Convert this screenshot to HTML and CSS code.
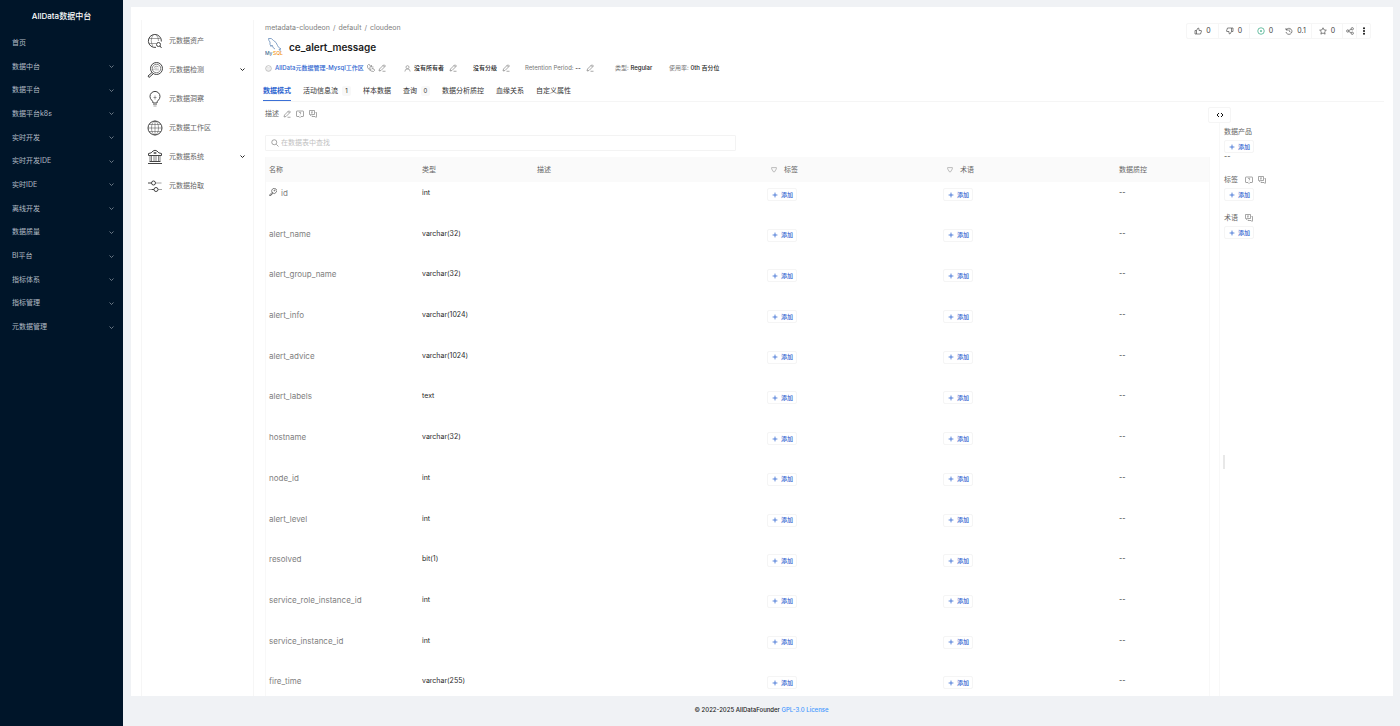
FILE: index.html
```html
<!DOCTYPE html>
<html lang="zh-CN">
<head>
<meta charset="utf-8">
<title>AllData数据中台</title>
<link rel="stylesheet" href="styles.css">
</head>
<body>
<svg class="sprite" aria-hidden="true">
  <symbol id="chevron" viewBox="0 0 10 10"><path d="M1 3l4 4 4-4"/></symbol>
  <symbol id="pencil" viewBox="0 0 16 16"><path d="M2 14l1-4L11 2q1-1 2 0l1 1q1 1 0 2L6 13zM10 3l3 3M9 14.500h6"/></symbol>
  <symbol id="request" viewBox="0 0 16 16"><path d="M2 2h12q1 0 1 1v9q0 1-1 1h-4l-2 2-2-2H2q-1 0-1-1V3q0-1 1-1zM6.500 6q0-1.500 1.500-1.500T9.500 6 8 8M8 9.500v1"/></symbol>
  <symbol id="comments" viewBox="0 0 16 16"><path d="M1 1h10v8H5l-2 2V9H1zM4 4h4M4 6h3M13 5h2v8h-1v2l-2-2H6v-2"/></symbol>
  <symbol id="search" viewBox="0 0 16 16"><circle cx="6.500" cy="6.500" r="5"/><path d="M10.500 10.500L15 15"/></symbol>
  <symbol id="plus" viewBox="0 0 10 10"><path d="M5 1v8M1 5h8"/></symbol>
  <symbol id="filter" viewBox="0 0 10 10"><path d="M1 1h8v2L6 8H4L1 3z"/></symbol>
  <symbol id="user" viewBox="0 0 16 16"><circle cx="8" cy="5" r="3.500"/><path d="M2 15q0-6 6-6t6 6"/></symbol>
  <symbol id="phone" viewBox="0 0 16 16"><path d="M3 1l3 1 1 4-2 2q1 3 3 3l2-2 4 1 1 3-2 2Q8 15 4 11T1 3zM9 2v4h4"/></symbol>
  <symbol id="key" viewBox="0 0 16 16"><path d="M6 9L1 14v1h3v-2h2v-2l2-1M6 9q-2-4 1-7t7 0 0 7-6 1z"/><circle cx="11" cy="5" r="1"/></symbol>
  <symbol id="like" viewBox="0 0 16 16"><path d="M2 7h3v7H2zM5 7l3-5q2 0 2 2v3h4q1 0 1 1l-2 6H5"/></symbol>
  <symbol id="dislike" viewBox="0 0 16 16"><path d="M11 2h3v7h-3zM11 9l-3 5q-2 0-2-2V9H2q-1 0-1-1l2-6h8"/></symbol>
  <symbol id="task" viewBox="0 0 16 16"><circle cx="8" cy="8" r="6.500"/><circle cx="8" cy="8" r="1" fill="currentColor"/></symbol>
  <symbol id="history" viewBox="0 0 16 16"><path d="M2 2v4h4M2.500 6a6 6 0 1 1-.500 4M8 4.500V8l3 2"/></symbol>
  <symbol id="star" viewBox="0 0 16 16"><path d="M8 1.500l2 4.300 4.700.6-3.400 3.200.9 4.700L8 12l-4.200 2.300.9-4.700L1.300 6.400 6 5.800z"/></symbol>
  <symbol id="share" viewBox="0 0 16 16"><circle cx="3.500" cy="8" r="2.300"/><circle cx="12.500" cy="3.500" r="2.300"/><circle cx="12.500" cy="12.500" r="2.300"/><path d="M5.500 7l5-2.500M5.500 9l5 2.500"/></symbol>
  <symbol id="dots" viewBox="0 0 16 16"><g fill="currentColor" stroke="none"><circle cx="8" cy="2.500" r="2"/><circle cx="8" cy="8" r="2"/><circle cx="8" cy="13.500" r="2"/></g></symbol>
  <symbol id="code" viewBox="0 0 16 16"><path d="M6 4L2 8l4 4M10 4l4 4-4 4"/></symbol>
  <symbol id="workspace" viewBox="0 0 16 16"><circle cx="8" cy="8" r="6.500"/><path d="M4 6h8M3 9h10M5 12h6" stroke-width=".6"/></symbol>
  <symbol id="globe-search" viewBox="0 0 32 32"><path d="M18 28.700A13 13 0 1 1 28.700 17"/><g stroke-width="1"><path d="M12 4q-7 11 0 23M19 4q4 5 4 12M4 11h23M4 21h14"/></g><circle cx="23" cy="23" r="4"/><path d="M26 26l3 4"/></symbol>
  <symbol id="inspect" viewBox="0 0 32 32"><circle cx="19" cy="13" r="12"/><circle cx="19" cy="13" r="8.500" stroke-width="1.300"/><path d="M10 21l-8 7 2 3 8-7"/><path d="M14 16v-3M18 17v-6M22 17v-4M14 11l4-3 5 2" stroke-width="1"/></symbol>
  <symbol id="bulb" viewBox="0 0 32 32"><path d="M12 24q0-4-3-6a10 10 0 1 1 14 0q-3 2-3 6z"/><path d="M16 9v8M13 13h6M12 27h8M13 30h6" stroke-width="1"/></symbol>
  <symbol id="globe" viewBox="0 0 32 32"><circle cx="16" cy="16" r="14"/><g stroke-width="1"><ellipse cx="16" cy="16" rx="7" ry="14"/><path d="M2 16h28M4 9h24M4 23h24M16 2v28"/></g></symbol>
  <symbol id="bank" viewBox="0 0 32 32"><path d="M3 9q6 0 9-5 4-3 8 0 3 5 9 5v4H3zM5 25h22M2 29h28M16 6v4M13 8h6"/><path d="M6 14v10M9 14v10M14 14v10M18 14v10M23 14v10M26 14v10" stroke-width="1.300"/></symbol>
  <symbol id="sliders" viewBox="0 0 32 32"><circle cx="13" cy="10" r="4"/><circle cx="18" cy="23" r="4"/><path d="M2 10h7M9 23h5"/><path d="M18 10h11M22 23h8M3 23h6" stroke-width="1"/></symbol>
</svg>

<aside class="sidebar">
  <h1 class="brand">AllData数据中台</h1>
  <nav class="menu" id="menu"></nav>
</aside>

<div class="page">
  <main class="card">
    <nav class="subnav">
      <a href="#"><svg class="ic-lg"><use href="#globe-search"/></svg><span>元数据资产</span></a>
      <a href="#"><svg class="ic-lg"><use href="#inspect"/></svg><span>元数据检测</span><svg class="ic-xs"><use href="#chevron"/></svg></a>
      <a href="#"><svg class="ic-lg"><use href="#bulb"/></svg><span>元数据洞察</span></a>
      <a href="#"><svg class="ic-lg"><use href="#globe"/></svg><span>元数据工作区</span></a>
      <a href="#"><svg class="ic-lg"><use href="#bank"/></svg><span>元数据系统</span><svg class="ic-xs"><use href="#chevron"/></svg></a>
      <a href="#"><svg class="ic-lg"><use href="#sliders"/></svg><span>元数据拾取</span></a>
    </nav>

    <section class="content">
      <header class="head">
        <div class="head-main">
          <nav class="crumbs"><a href="#">metadata-cloudeon</a><span>/</span><a href="#">default</a><span>/</span><a href="#">cloudeon</a></nav>
          <div class="title">
            <svg class="logo" viewBox="0 0 36 36" role="img" aria-label="MySQL">
              <g fill="none" stroke="#5f86b5" stroke-width="1.500"><path d="M7 1q6-2 10 4 6 3 8 10 1 4 7 7l-4 1 4 4M7 1q0 4 3 7-1 5 2 9l2-3q2 7 6 8"/></g>
              <text x="0" y="34" class="logo-blue">My</text><text x="16" y="34" class="logo-orange">SQL</text>
            </svg>
            <h2>ce_alert_message</h2>
          </div>
        </div>
        <div class="actions">
          <button><svg class="ic"><use href="#like"/></svg>0</button>
          <button><svg class="ic"><use href="#dislike"/></svg>0</button>
          <button class="green"><svg class="ic"><use href="#task"/></svg>0</button>
          <button class="joined"><svg class="ic"><use href="#history"/></svg>0.1</button>
          <button><svg class="ic"><use href="#star"/></svg>0</button>
          <button class="slim" aria-label="分享"><svg class="ic"><use href="#share"/></svg></button>
          <button class="slim" aria-label="更多"><svg class="ic"><use href="#dots"/></svg></button>
        </div>
      </header>

      <div class="meta">
        <div><svg class="ic-sm"><use href="#workspace"/></svg><a href="#">AllData元数据管理-Mysql工作区</a><svg class="ic"><use href="#phone"/></svg><svg class="ic"><use href="#pencil"/></svg></div>
        <div><svg class="ic-sm"><use href="#user"/></svg><b>没有所有者</b><svg class="ic"><use href="#pencil"/></svg></div>
        <div><b>没有分级</b><svg class="ic"><use href="#pencil"/></svg></div>
        <div><span>Retention Period: <b>--</b></span><svg class="ic"><use href="#pencil"/></svg></div>
        <div><span>类型: <b>Regular</b></span></div>
        <div><span>使用率: <b>0th 百分位</b></span></div>
      </div>

      <nav class="tabs">
        <a href="#" class="active">数据模式</a>
        <a href="#">活动信息流<i>1</i></a>
        <a href="#">样本数据</a>
        <a href="#">查询<i>0</i></a>
        <a href="#">数据分析质控</a>
        <a href="#">血缘关系</a>
        <a href="#">自定义属性</a>
      </nav>

      <div class="body">
        <div class="schema">
          <div class="desc">描述<svg class="ic"><use href="#pencil"/></svg><svg class="ic"><use href="#request"/></svg><svg class="ic"><use href="#comments"/></svg></div>
          <label class="search"><svg class="ic"><use href="#search"/></svg><input type="text" placeholder="在数据表中查找" aria-label="在数据表中查找"></label>
          <table>
            <colgroup><col class="c-name"><col class="c-type"><col class="c-desc"><col class="c-tag"><col class="c-tag"><col class="c-quality"></colgroup>
            <thead><tr><th>名称</th><th>类型</th><th>描述</th><th class="filtered"><svg class="ic-xs"><use href="#filter"/></svg>标签</th><th class="filtered"><svg class="ic-xs"><use href="#filter"/></svg>术语</th><th>数据质控</th></tr></thead>
            <tbody id="rows"></tbody>
          </table>
        </div>
        <aside class="panel">
          <button class="toggle" aria-label="收起"><svg class="ic"><use href="#code"/></svg></button>
          <div class="panel-body">
            <section><h3>数据产品</h3><button class="add"><svg class="ic-xs"><use href="#plus"/></svg>添加</button><p>--</p></section>
            <section><h3>标签<svg class="ic"><use href="#request"/></svg><svg class="ic"><use href="#comments"/></svg></h3><button class="add"><svg class="ic-xs"><use href="#plus"/></svg>添加</button></section>
            <section><h3>术语<svg class="ic"><use href="#comments"/></svg></h3><button class="add"><svg class="ic-xs"><use href="#plus"/></svg>添加</button></section>
            <div class="grip"></div>
          </div>
        </aside>
      </div>
    </section>
  </main>
  <footer>© 2022-2025 AllDataFounder <a href="#">GPL-3.0 License</a></footer>
</div>
<script src="app.js"></script>
</body>
</html>
```
FILE: styles.css
```css
* { box-sizing: border-box; }
body {
  margin: 0;
  height: 100vh;
  display: flex;
  overflow: hidden;
  background: #f0f2f5;
  color: #37352f;
  font: 7px/10px Inter, "Noto Sans CJK SC", sans-serif;
}
a { color: inherit; text-decoration: none; }
button { font: inherit; color: inherit; background: none; border: 0; padding: 0; }
h1, h2, h3, p { margin: 0; }
svg { flex: none; fill: none; stroke: currentColor; stroke-width: 1.3; }
.sprite { position: absolute; width: 0; height: 0; }
.ic { width: 8px; height: 8px; }
.ic-sm { width: 7px; height: 7px; }
.ic-xs { width: 6px; height: 6px; }
.ic-lg { width: 16px; height: 16px; stroke-width: 2; }

.sidebar { width: 123px; flex: none; background: #001529; color: #b3bcc5; }
.brand { height: 31px; color: #fff; font-size: 8px; line-height: 32px; font-weight: 500; text-align: center; }
.menu { display: grid; grid-auto-rows: 1fr; height: 308px; }
.menu a { display: flex; align-items: center; justify-content: space-between; padding: 0 9px 0 12px; }
.menu svg { width: 5px; height: 5px; color: #a0aab4; }

.page { flex: 1; min-width: 0; display: flex; flex-direction: column; }
.card { flex: 1; min-height: 0; display: flex; margin: 7px 7px 0 8px; padding: 13px 9px 0 10px; background: #fff; overflow: hidden; }
footer { height: 30px; font-size: 6px; line-height: 28px; text-align: center; color: #222; font-weight: 500; }
footer a { color: #4096ff; }

.subnav { width: 113px; flex: none; padding: 6px 8px 0 5px; border: solid #f6f6f6; border-width: 0 1px; color: #666; }
.subnav a { display: flex; align-items: center; gap: 6px; height: 29px; }
.subnav svg { color: #444; }
.subnav .ic-xs { width: 5px; height: 5px; margin-left: auto; stroke-width: 2; color: #222; }

.content { flex: 1; min-width: 0; padding-left: 11px; display: flex; flex-direction: column; }
.head { display: flex; justify-content: space-between; align-items: flex-start; height: 41px; }
.crumbs { display: flex; gap: 3px; padding-top: 3px; color: #808080; }
.title { display: flex; align-items: center; gap: 6px; height: 28px; }
.title h2 { font-size: 10px; line-height: 14px; font-weight: 600; color: #1c1c1c; }
.logo { width: 18px; height: 18px; stroke: none; }
.logo text { font: 500 10px Inter, sans-serif; }
.logo-blue { fill: #3d6e93; }
.logo-orange { fill: #f29111; }

.actions { display: flex; height: 16px; margin: 3px 13px 0 0; border: 1px solid #f6f6f6; border-radius: 2px; color: #444; }
.actions button { display: flex; align-items: center; justify-content: center; gap: 4px; width: 31px; border-left: 1px solid #f6f6f6; }
.actions button:first-child, .actions .joined { border-left: 0; }
.actions .slim { width: 14px; }
.actions .green svg { color: #1f9d74; }
.actions .slim:last-child { color: #111; }

.meta { display: grid; grid-template-columns: 139px 69px 52px 90px 54px auto; height: 14px; font-size: 6px; color: #757575; }
.meta div { display: flex; align-items: center; gap: 3px; white-space: nowrap; }
.meta b { font-weight: 500; color: #222; }
.meta a { color: #2f66d0; font-weight: 500; }
.meta .ic { color: #777; }
.meta b + .ic, .meta span + .ic { margin-left: 2px; }
.meta div:first-child .ic-sm { color: #999; }

.tabs { display: flex; gap: 12px; height: 27px; margin-left: -2px; border-bottom: 1px solid #f5f5f5; color: #333; }
.tabs a { display: flex; align-items: center; gap: 4px; padding-top: 6px; border-bottom: 1px solid transparent; }
.tabs a.active { border-color: #3b70d6; color: #2f66d0; font-weight: 700; }
.tabs i { width: 9px; background: #f8f8f8; border-radius: 2px; font-style: normal; font-size: 6px; text-align: center; }

.body { flex: 1; min-height: 0; display: flex; gap: 2px; }
.schema { flex: 1; min-width: 0; padding-top: 7px; }
.desc { display: flex; align-items: center; gap: 4px; height: 10px; color: #666; }
.desc .ic { color: #777; }
.desc .ic + .ic { margin-left: 1px; }
.search { display: flex; align-items: center; gap: 2px; width: 50%; height: 16px; margin: 16px 0 6px; padding: 0 5px; border: 1px solid #f3f3f3; border-radius: 1px; color: #777; }
.search input { flex: 1; min-width: 0; padding: 0; border: 0; outline: 0; font: inherit; background: none; }
.search input::placeholder { color: #bfbfbf; }

table { width: 100%; height: 554px; table-layout: fixed; border-collapse: separate; border-spacing: 0; border: solid #f8f8f8; border-width: 0 1px; }
.c-name { width: 153px; }
.c-type { width: 115px; }
.c-desc { width: 230px; }
.c-tag { width: 176px; }
.c-quality { width: 93px; }
th { height: 25px; padding: 0 3px; background: #fafafa; color: #666; font-weight: 400; text-align: left; }
th.filtered { padding-left: 7px; }
th svg { margin-right: 7px; color: #aaa; vertical-align: middle; }
td { padding: 6px 3px 0; vertical-align: top; color: #292929; }
td.name { color: #808080; font-size: 8px; }
td.name svg { margin-right: 4px; color: #444; }
.add { display: flex; align-items: center; gap: 3px; width: 30px; height: 13px; padding-left: 4px; border: 1px solid #f5f5f5; border-radius: 2px; color: #2f66d0; font-size: 6px; font-weight: 500; }

.panel { flex: none; width: 176px; padding-top: 5px; display: flex; flex-direction: column; }
.toggle { display: flex; align-items: center; justify-content: center; width: 23px; height: 16px; border: 1px solid #f5f5f5; border-radius: 2px; color: #111; }
.toggle svg { stroke-width: 2; }
.panel-body { flex: 1; position: relative; margin-left: 11px; padding: 4px 0 0 4px; border-left: 1px solid #f8f8f8; }
.panel h3 { display: flex; align-items: center; gap: 5px; font-size: 7px; line-height: 10px; font-weight: 400; color: #666; margin-bottom: 3px; }
.panel h3 svg { color: #777; }
.panel h3 svg:first-of-type { margin-left: 2px; }
.panel section { margin-bottom: 12px; }
.panel p { line-height: 8px; margin-bottom: 14px; }
.grip { position: absolute; left: 3px; top: 58%; width: 2px; height: 14px; background: #e8e8e8; }
```
FILE: app.js
```javascript
const menu = ['首页', '数据中台', '数据平台', '数据平台k8s', '实时开发', '实时开发IDE', '实时IDE', '离线开发', '数据质量', 'BI平台', '指标体系', '指标管理', '元数据管理'];
document.getElementById('menu').innerHTML = menu.map((name, i) =>
  `<a href="#"><span>${name}</span>${i ? '<svg class="ic-xs"><use href="#chevron"/></svg>' : ''}</a>`).join('');

const columns = [
  ['id', 'int'], ['alert_name', 'varchar(32)'], ['alert_group_name', 'varchar(32)'],
  ['alert_info', 'varchar(1024)'], ['alert_advice', 'varchar(1024)'], ['alert_labels', 'text'],
  ['hostname', 'varchar(32)'], ['node_id', 'int'], ['alert_level', 'int'], ['resolved', 'bit(1)'],
  ['service_role_instance_id', 'int'], ['service_instance_id', 'int'], ['fire_time', 'varchar(255)']
];
const add = '<button class="add"><svg class="ic-xs"><use href="#plus"/></svg>添加</button>';
document.getElementById('rows').innerHTML = columns.map(([name, type], i) =>
  `<tr><td class="name">${i ? '' : '<svg class="ic"><use href="#key"/></svg>'}${name}</td><td>${type}</td><td></td><td>${add}</td><td>${add}</td><td>--</td></tr>`).join('');
```
